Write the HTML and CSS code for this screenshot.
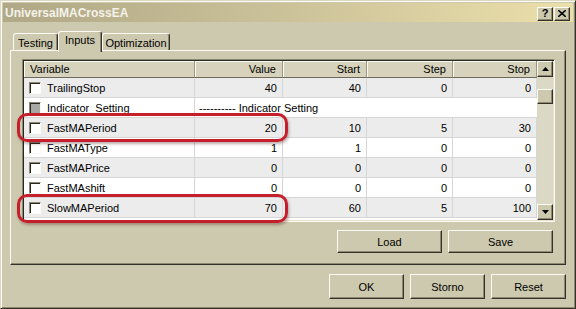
FILE: index.html
```html
<!DOCTYPE html>
<html lang="en">
<head>
    <meta charset="UTF-8">
    <title>UniversalMACrossEA</title>
    <link rel="stylesheet" href="styles.css">
</head>
<body>

<div class="window">
    <div class="titlebar">
        <span class="title">UniversalMACrossEA</span>
        <div class="caption-buttons">
            <span class="cap-btn help">?</span>
            <span class="cap-btn">
                <svg width="8" height="7" viewBox="0 0 8 7"><path d="M0 0 L8 7 M8 0 L0 7" stroke="#000" stroke-width="1.6"/></svg>
            </span>
        </div>
    </div>

    <div class="tabs">
        <div class="tab tab-testing">Testing</div>
        <div class="tab tab-inputs active">Inputs</div>
        <div class="tab tab-opt">Optimization</div>
    </div>

    <div class="panel">
        <div class="list">
            <div class="grid">
                <div class="row head">
                    <div class="cell left">Variable</div>
                    <div class="cell">Value</div>
                    <div class="cell">Start</div>
                    <div class="cell">Step</div>
                    <div class="cell">Stop</div>
                </div>
                <div class="row odd">
                    <div class="cell left"><span class="check"></span>TrailingStop</div>
                    <div class="cell">40</div>
                    <div class="cell">40</div>
                    <div class="cell">0</div>
                    <div class="cell">0</div>
                </div>
                <div class="row">
                    <div class="cell left"><span class="check disabled"></span>Indicator_Setting</div>
                    <div class="cell span left">---------- Indicator Setting</div>
                </div>
                <div class="row odd">
                    <div class="cell left"><span class="check"></span>FastMAPeriod</div>
                    <div class="cell">20</div>
                    <div class="cell">10</div>
                    <div class="cell">5</div>
                    <div class="cell">30</div>
                </div>
                <div class="row">
                    <div class="cell left"><span class="check"></span>FastMAType</div>
                    <div class="cell">1</div>
                    <div class="cell">1</div>
                    <div class="cell">0</div>
                    <div class="cell">0</div>
                </div>
                <div class="row odd">
                    <div class="cell left"><span class="check"></span>FastMAPrice</div>
                    <div class="cell">0</div>
                    <div class="cell">0</div>
                    <div class="cell">0</div>
                    <div class="cell">0</div>
                </div>
                <div class="row">
                    <div class="cell left"><span class="check"></span>FastMAshift</div>
                    <div class="cell">0</div>
                    <div class="cell">0</div>
                    <div class="cell">0</div>
                    <div class="cell">0</div>
                </div>
                <div class="row odd">
                    <div class="cell left"><span class="check"></span>SlowMAPeriod</div>
                    <div class="cell">70</div>
                    <div class="cell">60</div>
                    <div class="cell">5</div>
                    <div class="cell">100</div>
                </div>
            </div>
            <div class="scrollbar">
                <div class="sb-btn">
                    <svg width="7" height="4" viewBox="0 0 7 4"><path d="M3.5 0 L7 4 L0 4 Z" fill="#000"/></svg>
                </div>
                <div class="sb-thumb"></div>
                <div class="sb-track"></div>
                <div class="sb-btn">
                    <svg width="7" height="4" viewBox="0 0 7 4"><path d="M0 0 L7 0 L3.5 4 Z" fill="#000"/></svg>
                </div>
            </div>
        </div>
        <div class="panel-buttons">
            <button class="btn btn-wide">Load</button>
            <button class="btn btn-wide">Save</button>
        </div>
    </div>

    <div class="dialog-buttons">
        <button class="btn">OK</button>
        <button class="btn">Storno</button>
        <button class="btn">Reset</button>
    </div>

    <!-- red marker frames drawn over the list -->
    <div class="mark mark-1"></div>
    <div class="mark mark-2"></div>
</div>

</body>
</html>
```

FILE: styles.css
```css
body {
    margin: 0;
    font-family: "Liberation Sans", Arial, sans-serif;
    font-size: 11px;
    color: #000;
    background-color: #cdc9ae;
}
.window {
    position: relative;
    width: 576px;
    height: 309px;
    box-sizing: border-box;
    border: 1px solid;
    border-color: #dcd8c2 #33312a #33312a #dcd8c2;
    box-shadow: inset 1px 1px #fbfaf4, inset -1px -1px #8c8872;
    padding: 2px;
    display: flex;
    flex-direction: column;
    background-color: #cdc9ae;
}

/* title bar */
.titlebar {
    height: 19px;
    display: flex;
    align-items: center;
    justify-content: space-between;
    padding: 0 3px 0 2px;
    background: linear-gradient(90deg, #b0a886, #c9bf98 45%, #ebdfaa);
}
.title {
    font-size: 12px;
    font-weight: bold;
    color: #f4f2ea;
}
.caption-buttons {
    display: flex;
    gap: 1px;
    margin-top: 2px;
}
.cap-btn {
    width: 16px;
    height: 14px;
    box-sizing: border-box;
    display: flex;
    justify-content: center;
    align-items: center;
    background-color: #cdc9ae;
    border: 1px solid;
    border-color: #fbfaf4 #33312a #33312a #fbfaf4;
    box-shadow: inset -1px -1px #8c8872;
}
.help {
    font-size: 11px;
    font-weight: bold;
    line-height: 1;
}

/* tabs */
.tabs {
    display: flex;
    align-items: flex-end;
    height: 19px;
    margin: 9px 7px 0;
    padding-left: 3px;
    position: relative;
    z-index: 1;
}
.tab {
    height: 17px;
    box-sizing: border-box;
    display: flex;
    justify-content: center;
    align-items: center;
    padding-top: 2px;
    background-color: #cdc9ae;
    border-top: 1px solid #fbfaf4;
    border-left: 1px solid #fbfaf4;
    border-right: 1px solid #33312a;
    border-radius: 3px 3px 0 0;
    box-shadow: inset -1px 0 #8c8872;
}
.tab-testing { width: 45px; }
.tab-inputs { width: 44px; }
.tab-opt { width: 68px; }
.tab.active {
    height: 21px;
    margin-bottom: -2px;
    padding: 0 0 4px;
}

/* tab page */
.panel {
    height: 215px;
    box-sizing: border-box;
    margin: 0 7px;
    border: 1px solid;
    border-color: #fbfaf4 #33312a #33312a #fbfaf4;
    box-shadow: inset -1px -1px #8c8872;
    padding: 8px 10px 11px 11px;
    display: flex;
    flex-direction: column;
}

/* list view */
.list {
    height: 163px;
    box-sizing: border-box;
    border: 1px solid;
    border-color: #8c8872 #fbfaf4 #fbfaf4 #8c8872;
    padding: 1px;
    box-shadow: inset 1px 1px #2a2820, inset -1px -1px #e4e0cc;
    display: flex;
    background-color: #fff;
}
.grid {
    width: 513px;
}
.row {
    display: grid;
    grid-template-columns: 171px 88px 84px 86px 84px;
    height: 20px;
}
.row.odd {
    background-color: #ececec;
}
.cell {
    display: flex;
    align-items: center;
    justify-content: flex-end;
    padding-right: 5px;
    border-right: 1px solid #d6d6d6;
    border-bottom: 1px solid #d6d6d6;
    white-space: nowrap;
}
.cell.left {
    justify-content: flex-start;
    padding-left: 5px;
}
.cell.span {
    grid-column: span 4;
    border-right: none;
    padding-left: 4px;
}
.row.head {
    height: 17px;
    background-color: #d6d2bb;
}
.row.head .cell {
    border-right: 1px solid #9a9680;
    border-bottom: 1px solid #6e6b5a;
    box-shadow: inset 1px 1px #fbfaf4;
    padding-right: 6px;
}
.row.head .cell.left {
    padding-left: 6px;
}
.check {
    width: 12px;
    height: 12px;
    box-sizing: border-box;
    margin-right: 6px;
    background-color: #fff;
    border: 1px solid;
    border-color: #8c8872 #fbfaf4 #fbfaf4 #8c8872;
    box-shadow: inset 1px 1px #2a2820;
}
.check.disabled {
    background-color: #a9a9a4;
}

/* scroll bar */
.scrollbar {
    width: 16px;
    display: flex;
    flex-direction: column;
    background-color: #dcd8c6;
}
.sb-btn,
.sb-thumb {
    box-sizing: border-box;
    background-color: #cdc9ae;
    border: 1px solid;
    border-color: #fbfaf4 #33312a #33312a #fbfaf4;
    box-shadow: inset -1px -1px #8c8872;
}
.sb-btn {
    height: 16px;
    display: flex;
    justify-content: center;
    align-items: center;
}
.sb-thumb {
    height: 15px;
    margin-top: 12px;
}
.sb-track {
    flex: 1;
}

/* buttons */
.btn {
    font-family: "Liberation Sans", Arial, sans-serif;
    font-size: 11px;
    color: #000;
    width: 75px;
    height: 25px;
    padding: 0;
    background-color: #cdc9ae;
    border: 1px solid;
    border-color: #fbfaf4 #33312a #33312a #fbfaf4;
    box-shadow: inset -1px -1px #8c8872;
}
.btn-wide {
    width: 105px;
    height: 23px;
}
.panel-buttons {
    display: flex;
    justify-content: flex-end;
    gap: 6px;
    margin-top: 8px;
    padding-right: 2px;
}
.dialog-buttons {
    display: flex;
    justify-content: flex-end;
    gap: 6px;
    margin: 9px 7px 0 0;
}

/* red highlight frames */
.mark {
    position: absolute;
    left: 16px;
    width: 271px;
    height: 29px;
    box-sizing: border-box;
    border: 3px solid #c41f2b;
    border-radius: 10px;
    box-shadow: 1px 2px 3px rgba(70, 20, 20, 0.35);
}
.mark-1 { top: 112px; }
.mark-2 { top: 193px; }
```
